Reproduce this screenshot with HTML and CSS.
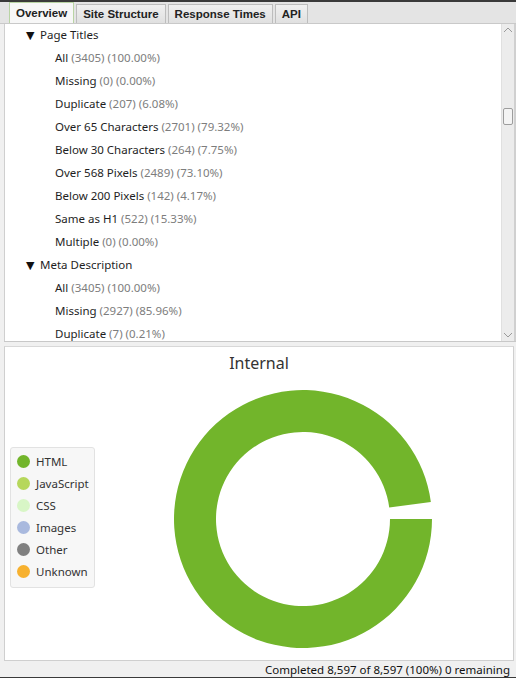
FILE: index.html
```html
<!DOCTYPE html>
<html>
<head>
<meta charset="utf-8">
<link rel="stylesheet" href="styles.css">
</head>
<body>
<div class="app">
  <div class="topline"></div>
  <div class="tabs">
    <div class="tab active">Overview</div>
    <div class="tab">Site Structure</div>
    <div class="tab">Response Times</div>
    <div class="tab">API</div>
  </div>
  <div class="tree">
    <div class="rows">
      <div class="row group"><span class="tri">▼</span>Page Titles</div>
      <div class="row item">All <span class="c">(3405) (100.00%)</span></div>
      <div class="row item">Missing <span class="c">(0) (0.00%)</span></div>
      <div class="row item">Duplicate <span class="c">(207) (6.08%)</span></div>
      <div class="row item">Over 65 Characters <span class="c">(2701) (79.32%)</span></div>
      <div class="row item">Below 30 Characters <span class="c">(264) (7.75%)</span></div>
      <div class="row item">Over 568 Pixels <span class="c">(2489) (73.10%)</span></div>
      <div class="row item">Below 200 Pixels <span class="c">(142) (4.17%)</span></div>
      <div class="row item">Same as H1 <span class="c">(522) (15.33%)</span></div>
      <div class="row item">Multiple <span class="c">(0) (0.00%)</span></div>
      <div class="row group"><span class="tri">▼</span>Meta Description</div>
      <div class="row item">All <span class="c">(3405) (100.00%)</span></div>
      <div class="row item">Missing <span class="c">(2927) (85.96%)</span></div>
      <div class="row item">Duplicate <span class="c">(7) (0.21%)</span></div>
    </div>
    <div class="scrollbar">
      <svg class="arrow" width="12" height="10" viewBox="0 0 12 10"><path d="M2 7 L6 3 L10 7" fill="none" stroke="#9a9a9a" stroke-width="1"/></svg>
      <div class="track"><div class="thumb"></div></div>
      <svg class="arrow" width="12" height="10" viewBox="0 0 12 10"><path d="M2 3 L6 7 L10 3" fill="none" stroke="#9a9a9a" stroke-width="1"/></svg>
    </div>
  </div>
  <div class="splitter"></div>
  <div class="chart">
    <div class="title">Internal</div>
    <div class="chart-body">
      <div class="legend">
        <div class="lg"><span class="dot" style="background:#72b52b"></span>HTML</div>
        <div class="lg"><span class="dot" style="background:#b6d75b"></span>JavaScript</div>
        <div class="lg"><span class="dot" style="background:#d8f6c6"></span>CSS</div>
        <div class="lg"><span class="dot" style="background:#a9b9de"></span>Images</div>
        <div class="lg"><span class="dot" style="background:#808080"></span>Other</div>
        <div class="lg"><span class="dot" style="background:#f7b12f"></span>Unknown</div>
      </div>
      <svg class="donut" width="262" height="262" viewBox="0 0 262 262">
        <path d="M 260 131 A 129 129 0 1 1 258.86 113.94 L 217.23 119.49 A 87 87 0 1 0 218 131 Z" fill="#72b52b"/>
      </svg>
    </div>
  </div>
  <div class="status">Completed 8,597 of 8,597 (100%) 0 remaining</div>
  <div class="bottomline"></div>
</div>
</body>
</html>
```
FILE: styles.css
```css
html, body {
  margin: 0;
  padding: 0;
}
body {
  background: #f0f0f0;
  font-family: "Noto Sans", "Open Sans", sans-serif;
  font-size: 11.5px;
  color: #1e1e1e;
}
.app {
  width: 516px;
  height: 678px;
  display: flex;
  flex-direction: column;
  overflow: hidden;
}
.topline {
  height: 2px;
  background: #3a3a3a;
  flex: none;
}
.tabs {
  height: 21px;
  flex: none;
  display: flex;
  align-items: flex-end;
  gap: 2px;
  padding-left: 9px;
  background: #e4e4e4;
  border-bottom: 1px solid #c9c9c9;
}
.tab {
  height: 18px;
  line-height: 18px;
  padding: 0 6px;
  font-family: "Liberation Sans", Arial, sans-serif;
  font-weight: bold;
  font-size: 11.5px;
  color: #222;
  background: linear-gradient(#f0f0f0, #e0e0e0);
  border: 1px solid #bdbdbd;
  border-bottom: none;
}
.tab.active {
  height: 20px;
  line-height: 21px;
  padding: 0 6px;
  background: #f7f7f7;
  border-color: #b9d4a4;
}
.tree {
  height: 317px;
  flex: none;
  margin-left: 4px;
  display: flex;
  background: #fff;
  border-left: 1px solid #cfcfcf;
}
.rows {
  flex: 1;
  overflow: hidden;
}
.row {
  height: 23px;
  line-height: 22px;
  white-space: nowrap;
}
.group {
  padding-left: 21px;
}
.tri {
  display: inline-block;
  width: 14px;
  font-size: 11px;
  color: #111;
  font-family: "DejaVu Sans", sans-serif;
}
.item {
  padding-left: 50px;
}
.c {
  color: #7d7d7d;
}
.scrollbar {
  width: 12px;
  flex: none;
  display: flex;
  flex-direction: column;
  align-items: center;
  background: #ececec;
  border-left: 1px solid #e0e0e0;
  border-right: 2px solid #d0d0d0;
}
.arrow {
  flex: none;
  margin: 1px 0;
}
.track {
  flex: 1;
  width: 100%;
  display: flex;
  flex-direction: column;
  align-items: center;
  padding-top: 72px;
}
.thumb {
  width: 8px;
  height: 15px;
  background: #f4f4f4;
  border: 1px solid #9d9d9d;
  border-radius: 2px;
}
.splitter {
  height: 4px;
  flex: none;
  margin-left: 4px;
  background: #f0f0f0;
  border-top: 1px solid #c8c8c8;
}
.chart {
  flex: 1;
  margin-left: 4px;
  margin-right: 2px;
  background: #fff;
  border-left: 1px solid #cfcfcf;
  border-right: 1px solid #cfcfcf;
  border-top: 1px solid #d8d8d8;
  border-bottom: 1px solid #cfcfcf;
  display: flex;
  flex-direction: column;
}
.title {
  text-align: center;
  font-size: 16px;
  color: #333;
  margin-top: 4px;
  height: 24px;
  line-height: 24px;
}
.chart-body {
  display: flex;
  align-items: center;
  margin-top: 13px;
}
.legend {
  margin-left: 5px;
  margin-bottom: 4px;
  width: 83px;
  padding: 3px 0 4px;
  background: #f7f7f7;
  border: 1px solid #e2e2e2;
  border-radius: 3px;
}
.lg {
  height: 22px;
  display: flex;
  align-items: center;
  color: #333;
  font-size: 11.5px;
}
.dot {
  width: 13px;
  height: 13px;
  border-radius: 50%;
  margin-left: 6px;
  margin-right: 6px;
}
.donut {
  margin-left: 77px;
}
.status {
  height: 16px;
  line-height: 17px;
  flex: none;
  text-align: right;
  padding-right: 6px;
  font-size: 11.5px;
  color: #111;
  background: #f0f0f0;
}
.bottomline {
  height: 1px;
  flex: none;
  background: #3a3a3a;
}
```
